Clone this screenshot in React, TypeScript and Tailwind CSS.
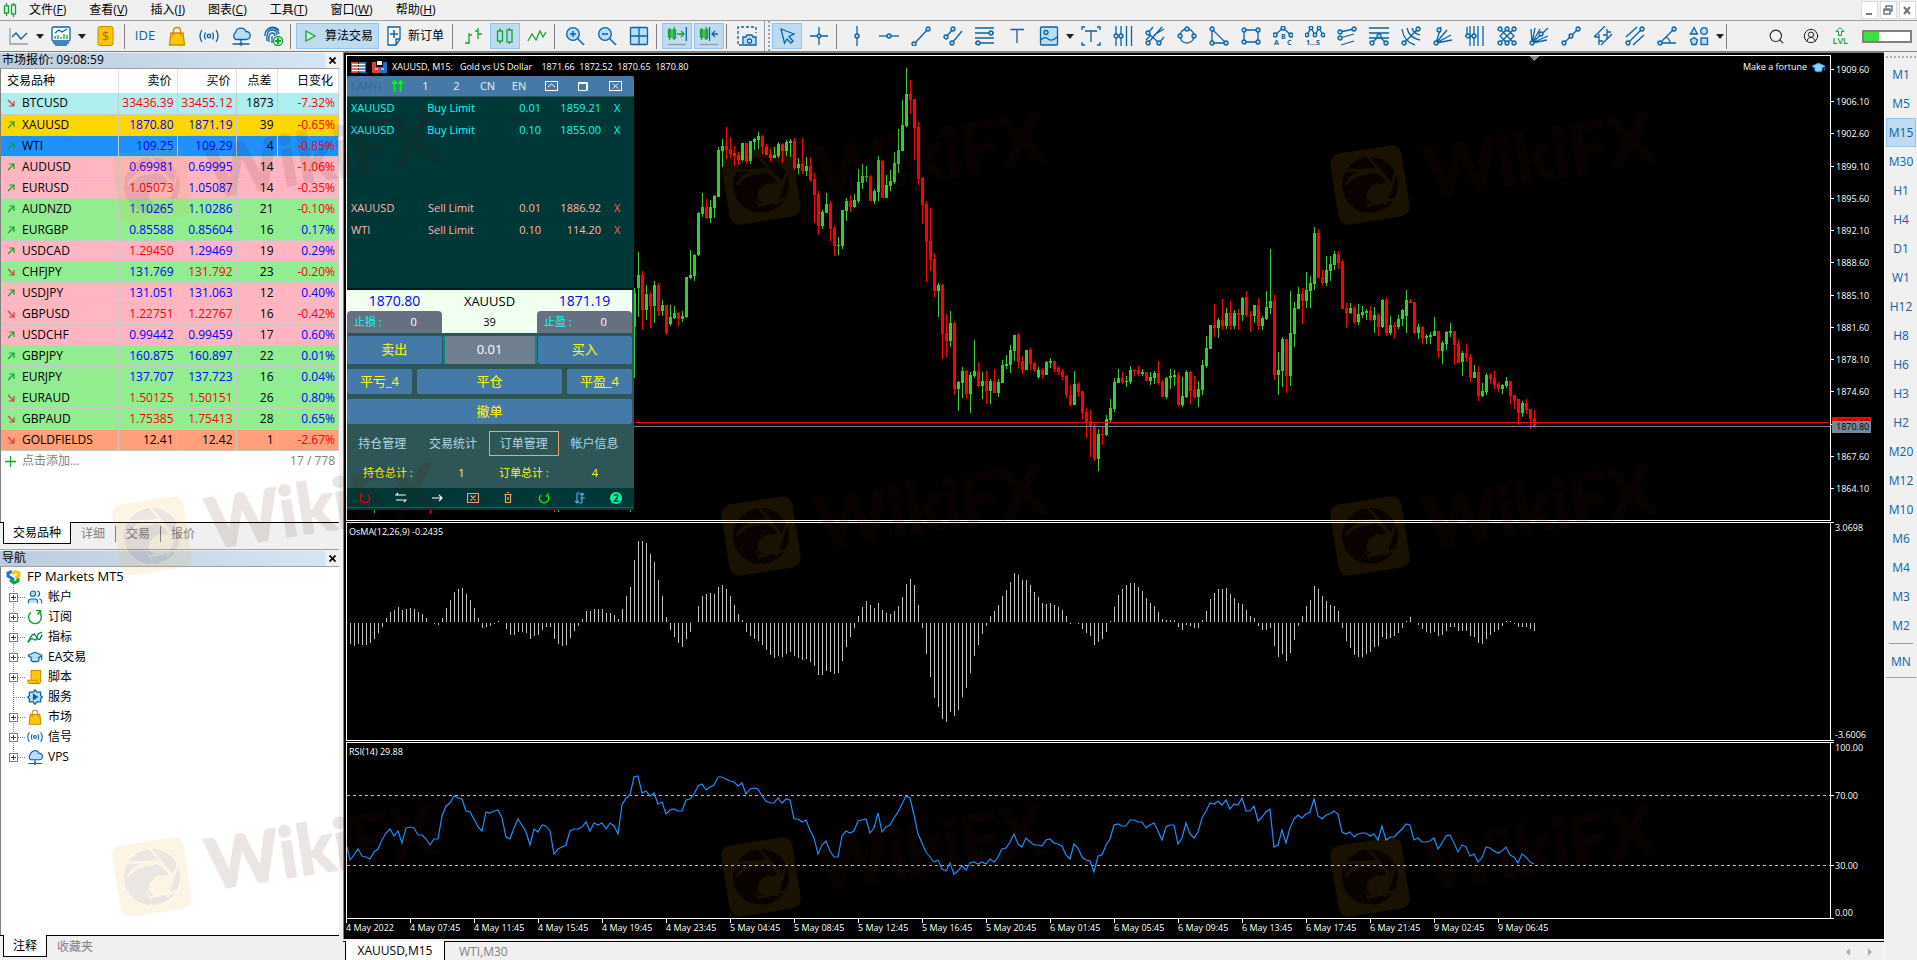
import * as React from "react";
import { CircleUserRound, GraduationCap, Search, Users } from "lucide-react";

const UI = "font-['Open_Sans','Noto_Sans_CJK_SC',sans-serif]";
const LINE = "#0b62a4";
const FILL = "#b9defa";

/* ---------- chart data ---------- */

// candle: u/d, high, low, body top, body bottom (third-pixel units)
const CANDLES_A = `u 683 953 700 800;u 576 770 645 683;d 633 809 645 749;u 675 779 702 749;d 693 803 702 737;u 663 788 675 737;d 669 767 675 752;u 720 767 735 752;d 735 824 735 818;u 735 797 770 791;u 738 776 759 773;d 756 797 759 776;u 752 785 768 776;u 651 773 651 770;u 570 657 645 654;u 582 662 585 648;u 456 588 459 585;u 399 471 441 462;d 417 477 441 474;u 420 489 441 474;u 405 474 408 444;u 261 410 270 410;u 237 321 258 272;d 201 297 258 270;d 231 294 267 282;d 258 317 279 288;d 276 314 285 299;u 249 303 249 300;d 249 308 249 303;u 243 312 243 303;u 234 270 237 246;u 216 267 228 240;d 225 282 228 261;d 252 285 258 285;d 267 306 282 294;u 261 294 285 293;u 246 294 252 288;d 249 309 252 272;u 240 288 246 272;u 237 291 243 249;d 234 330 243 324;u 294 342 312 324;d 234 342 312 333;u 291 348 318 333;d 291 365 318 360;d 339 489 357 405;d 393 525 402 498;u 450 507 456 498;u 399 459 432 459;d 423 543 432 507;d 498 588 504 558;u 531 585 555 558;u 450 567 450 558;u 414 483 423 453;d 405 456 423 441;u 402 444 420 441;u 327 429 366 423;u 312 387 348 369;u 318 366 348 350;d 345 423 348 423;u 387 432 393 423;u 288 423 300 396;d 300 414 303 414;u 345 414 375 414;u 330 393 363 378;u 276 372 309 366;u 207 339 270 312;u 120 273 195 272;u 24 201 102 198;d 60 162 102 120;d 117 300 117 204;d 186 375 201 357;d 351 492 354 435;d 423 666 432 546;d 444 633 543 600;d 579 711 597 693;u 669 771 675 693;d 672 897 675 822;d 762 891 819 843;u 753 861 789 843;d 786 1005 789 987;u 963 1053 966 987;u 921 1014 933 969;d 930 1017 933 1002;u 936 1059 945 1002;u 840 954 933 948;d 906 981 933 978;u 936 1017 963 978;d 933 1032 963 993;u 957 1032 963 993;d 927 999 963 999;u 957 1011 966 999;u 900 969 915 969;u 885 927 912 918;u 855 939 870 915;u 825 903 825 873;d 819 924 825 906;d 888 942 903 930;u 870 930 870 930;d 864 930 870 912;d 906 936 909 930;u 921 957 930 951;d 924 957 930 945;u 903 945 906 945;u 894 924 903 909;d 903 936 903 927;d 918 945 924 936;d 927 960 933 951;d 945 1014 948 1006;d 975 1041 1005 1035;u 933 1035 972 1035;d 966 1011 972 996;d 993 1077 993 1059;d 1044 1134 1056 1086;d 1050 1191 1083 1101;d 1092 1203 1098 1197;u 1107 1233 1122 1197;d 1101 1155 1122 1125;u 1065 1128 1077 1125;u 1017 1086 1044 1080;u 954 1056 966 1047;u 927 969 954 969;d 936 972 954 966;u 948 981 963 965`;

const CANDLES_B = `u 498 552 510 546;d 507 528 510 513;d 498 528 510 522;u 507 528 516 522;d 516 543 516 543;u 516 555 531 543;u 513 552 519 534;d 483 555 519 549;d 540 591 546 591;u 531 597 534 591;u 507 567 528 534;u 510 558 525 531;d 516 618 525 615;u 531 621 588 615;u 510 594 516 591;d 513 612 516 573;d 528 594 570 591;u 543 621 567 591;u 480 585 495 570;u 408 504 444 498;u 375 447 375 447;d 312 411 375 384;u 354 414 360 384;d 297 390 360 378;u 324 387 339 378;d 303 390 339 378;u 330 387 339 378;d 327 390 339 345;u 291 363 294 345;d 273 351 291 345;d 333 396 345 348;u 315 369 315 348;d 294 390 315 378;u 348 390 354 378;u 273 360 321 357;u 147 342 303 324;d 285 540 303 525;u 456 585 510 525;u 411 561 417 513;d 417 579 417 528;u 273 558 399 528;u 306 441 324 402;u 261 327 282 327;d 264 372 282 303;u 216 324 270 303;u 228 324 249 273;u 81 270 99 252;d 87 234 99 234;d 210 255 231 249;u 168 258 210 249;u 168 243 192 213;u 153 210 162 195;d 153 207 162 189;d 180 327 186 327;d 309 384 324 339;u 309 342 324 339;d 318 372 324 366;u 312 375 342 366;u 318 354 336 345;u 327 360 333 340;d 318 363 333 360;u 321 399 345 360;d 339 408 345 381;u 297 384 300 381;d 294 408 300 399;u 348 405 375 399;d 366 417 375 381;u 345 387 357 381;u 327 378 330 357;u 270 399 300 348;d 297 309 303 309;d 306 402 306 399;u 372 417 381 399;d 378 432 381 414;u 402 432 408 414;u 396 432 405 411;u 351 408 393 408;d 393 474 393 453;u 423 492 429 453;u 393 450 396 432;u 369 411 393 399;d 393 495 393 435;d 420 489 432 489;u 453 528 459 486;d 432 486 459 474;d 462 546 471 534;u 495 534 516 534;d 498 603 516 588;u 549 591 573 588;u 519 585 525 576;d 519 552 525 537;d 513 567 534 555;d 546 576 552 567;u 552 582 555 567;u 531 564 543 558;d 543 612 543 588;d 585 627 585 603;d 597 675 597 639;u 603 651 609 639;d 597 642 609 630;d 627 687 627 657;d 630 684 654 681`;

function parseCandles(src: string, base: number) {
  return src.split(";").map((row) => {
    const [dir, ...v] = row.split(" ");
    const [high, low, top, bottom] = v.map((n) => Math.round(base + Number(n) / 3));
    return { up: dir === "u", high, low, top, bottom };
  });
}

const CANDLES = [...parseCandles(CANDLES_A, 4), ...parseCandles(CANDLES_B, 144)];

const OSMA = [
  402, 408, 402, 405, 405, 399, 387, 369, 351, 324, 306, 300, 291, 300, 297, 294, 297, 306, 312, 324, 337, 342, 345, 324, 294, 270, 246, 237, 234, 252,
  270, 294, 324, 354, 351, 348, 342, 333, 337, 357, 375, 375, 366, 366, 369, 387, 378, 375, 360, 350, 351, 387, 402, 408, 405, 384, 363, 348, 327, 303,
  303, 297, 297, 297, 309, 309, 315, 328, 297, 258, 231, 150, 93, 93, 99, 132, 156, 210, 258, 321, 360, 381, 399, 411, 387, 366, 337, 288, 258, 252,
  249, 252, 231, 225, 237, 258, 285, 312, 330, 366, 378, 387, 393, 405, 420, 435, 444, 438, 441, 432, 426, 438, 444, 450, 447, 456, 468, 495, 495, 483,
  486, 492, 489, 453, 411, 381, 354, 318, 291, 273, 285, 294, 279, 300, 309, 312, 303, 288, 261, 222, 207, 225, 285, 354, 432, 501, 564, 591, 627, 636,
  606, 618, 600, 561, 534, 489, 438, 405, 372, 348, 318, 303, 285, 258, 240, 216, 189, 195, 210, 210, 225, 246, 261, 279, 282, 279, 285, 291, 300, 318,
  342, 337, 342, 357, 369, 378, 405, 396, 387, 366, 333, 291, 255, 237, 225, 219, 219, 231, 243, 264, 279, 288, 306, 327, 330, 330, 330, 351, 360, 345,
  348, 354, 354, 330, 303, 267, 249, 237, 237, 234, 252, 264, 279, 282, 300, 318, 324, 348, 360, 360, 354, 408, 441, 432, 453, 429, 390, 348, 318, 288,
  270, 228, 237, 258, 273, 285, 288, 303, 354, 393, 414, 435, 441, 441, 432, 426, 411, 408, 381, 387, 384, 378, 369, 354, 333, 321, 337, 345, 357, 366,
  369, 366, 378, 375, 363, 351, 351, 363, 363, 363, 378, 381, 399, 402, 387, 375, 366, 360, 348, 333, 333, 342, 351, 351, 351, 357, 363,
];

const RSI_A = [
  1051, 1034, 1018, 1039, 1042, 1048, 1025, 1016, 990, 970, 958, 978, 962, 999, 955, 952, 954, 975, 974, 988, 1005, 988, 988, 918, 888, 880, 858, 865,
  868, 903, 907, 926, 950, 964, 907, 910, 902, 901, 925, 981, 988, 955, 928, 945, 965, 1005, 958, 967, 946, 947, 963, 1032, 1018, 1011, 1004, 963, 958,
  958, 952, 935, 963, 940, 946, 938, 958, 940, 948, 973, 885, 865, 855, 802, 797, 849, 843, 859, 849, 883, 877, 912, 900, 898, 903, 903, 869, 868, 853,
  827, 823, 840, 832, 826, 802, 802, 807, 813, 817, 829, 819, 853, 838, 835, 836, 858, 874, 880, 878, 865, 880, 868, 869, 926, 928, 937, 931, 960, 985,
  1032, 1006, 992, 1022, 1042, 1042, 978, 964, 970, 962, 934, 929, 926, 970, 955, 910, 966, 952, 945, 924, 907, 883, 858, 865, 915, 972, 1000, 1027,
  1042, 1057, 1050, 1077, 1082, 1060, 1093, 1084, 1069, 1080, 1058, 1055, 1062,
];

const RSI_B = [
  1056, 1063, 1048, 1057, 1042, 1016, 1015, 996, 973, 1003, 1010, 985, 997, 1006, 1006, 1009, 991, 987, 998, 1003, 1009, 1036, 1048, 1003, 1015, 1040,
  1050, 1054, 1087, 1037, 1036, 1006, 988, 946, 942, 948, 949, 930, 931, 936, 937, 955, 946, 939, 963, 991, 952, 946, 946, 1003, 984, 940, 973, 983, 966,
  925, 902, 880, 883, 874, 886, 871, 898, 883, 885, 865, 904, 904, 889, 934, 920, 906, 898, 1012, 1004, 961, 1000, 955, 928, 916, 925, 912, 906, 868, 919,
  928, 916, 912, 904, 912, 967, 973, 967, 982, 973, 970, 970, 978, 973, 991, 949, 991, 982, 982, 970, 958, 943, 946, 991, 985, 996, 997, 994, 985, 1016,
  1000, 979, 976, 1000, 1027, 1006, 1012, 1039, 1033, 1057, 1045, 1012, 1015, 1022, 1030, 1024, 1012, 1036, 1040, 1060, 1033, 1042, 1057, 1063,
];

const TIMES = [
  "4 May 2022", "4 May 07:45", "4 May 11:45", "4 May 15:45", "4 May 19:45", "4 May 23:45", "5 May 04:45", "5 May 08:45", "5 May 12:45", "5 May 16:45",
  "5 May 20:45", "6 May 01:45", "6 May 05:45", "6 May 09:45", "6 May 13:45", "6 May 17:45", "6 May 21:45", "9 May 02:45", "9 May 06:45",
];

const PRICES = ["1909.60", "1906.10", "1902.60", "1899.10", "1895.60", "1892.10", "1888.60", "1885.10", "1881.60", "1878.10", "1874.60", "", "1867.60", "1864.10"];

/* ---------- market watch data ---------- */

const RED = "text-[#ff0000]";
const BLUE = "text-[#0000ff]";
const BLACK = "text-black";
const PINK = "bg-[#ffb6c1]";
const GREEN = "bg-[#90ee90]";

type Quote = [string, boolean, string, string, string, string, string, string, string];

// symbol, rising, bid, ask, spread, change, row colour, bid colour, ask colour
const QUOTES: Quote[] = [
  ["BTCUSD", false, "33436.39", "33455.12", "1873", "-7.32%", "bg-[#afeeee]", RED, RED],
  ["XAUUSD", true, "1870.80", "1871.19", "39", "-0.65%", "bg-[#ffd700]", BLUE, BLUE],
  ["WTI", true, "109.25", "109.29", "4", "-0.85%", "bg-[#1e90ff]", BLUE, BLUE],
  ["AUDUSD", true, "0.69981", "0.69995", "14", "-1.06%", PINK, BLUE, BLUE],
  ["EURUSD", true, "1.05073", "1.05087", "14", "-0.35%", PINK, RED, BLUE],
  ["AUDNZD", true, "1.10265", "1.10286", "21", "-0.10%", GREEN, BLUE, BLUE],
  ["EURGBP", true, "0.85588", "0.85604", "16", "0.17%", GREEN, BLUE, BLUE],
  ["USDCAD", true, "1.29450", "1.29469", "19", "0.29%", PINK, RED, BLUE],
  ["CHFJPY", false, "131.769", "131.792", "23", "-0.20%", GREEN, BLUE, RED],
  ["USDJPY", true, "131.051", "131.063", "12", "0.40%", PINK, BLUE, BLUE],
  ["GBPUSD", false, "1.22751", "1.22767", "16", "-0.42%", PINK, RED, RED],
  ["USDCHF", true, "0.99442", "0.99459", "17", "0.60%", PINK, BLUE, BLUE],
  ["GBPJPY", true, "160.875", "160.897", "22", "0.01%", GREEN, BLUE, BLUE],
  ["EURJPY", true, "137.707", "137.723", "16", "0.04%", GREEN, BLUE, BLUE],
  ["EURAUD", false, "1.50125", "1.50151", "26", "0.80%", GREEN, RED, RED],
  ["GBPAUD", false, "1.75385", "1.75413", "28", "0.65%", GREEN, RED, RED],
  ["GOLDFIELDS", false, "12.41", "12.42", "1", "-2.67%", "bg-[#ffa07a]", BLACK, BLACK],
];

/* ---------- icons ---------- */

function Ico({ children, size = 20, color = LINE }: { children: React.ReactNode; size?: number; color?: string }) {
  return (
    <svg width={size} height={size} viewBox="0 0 20 20" fill="none" stroke={color} strokeWidth="1.3" className="shrink-0">
      {children}
    </svg>
  );
}

// line drawing with little round handles on it
function Tool({ d, nodes = [] }: { d: string; nodes?: number[][] }) {
  return (
    <Ico>
      <path d={d} />
      {nodes.map(([x, y]) => (
        <circle key={x + "-" + y} cx={x} cy={y} r="2" fill={FILL} />
      ))}
    </Ico>
  );
}

function Bag({ size = 20 }: { size?: number }) {
  return (
    <Ico size={size} color="#c98a00">
      <path d="M4 7H16L17.500 19H2.500Z" fill="#fdc800" />
      <path d="M6.500 10V4.500Q6.500 1.500 10 1.500T13.500 4.500V10" />
    </Ico>
  );
}

function Signal({ size = 20 }: { size?: number }) {
  return (
    <Ico size={size}>
      <circle cx="10" cy="10" r="1.800" fill={FILL} />
      <path d="M6.500 6.500Q4.500 10 6.500 13.500M13.500 6.500Q15.500 10 13.500 13.500M3 4Q-1 10 3 16M17 4Q21 10 17 16" />
    </Ico>
  );
}

function CloudNet({ size = 20 }: { size?: number }) {
  return (
    <Ico size={size}>
      <path d="M5 13.500A4 4 0 0 1 4.500 6.500A5.500 5.500 0 0 1 15 5.500A4 4 0 0 1 15.500 13.500Z" fill={FILL} />
      <path d="M10 13.500V16.500M1.500 18H18.500" />
      <circle cx="10" cy="18" r="1" fill={FILL} />
    </Ico>
  );
}

function CandleIcon({ color = "#0fa52c" }: { color?: string }) {
  return (
    <Ico color={color}>
      <path d="M5 2V5M5 15V18M14.500 2V4M14.500 16V18" />
      <rect x="2.500" y="5" width="5" height="10" />
      <rect x="12" y="4" width="5" height="12" />
    </Ico>
  );
}

function Caret() {
  return (
    <button className="w-2 shrink-0" aria-label="more">
      <svg width="8" height="5" viewBox="0 0 8 5"><path d="M0 0H8L4 5Z" fill="#222" /></svg>
    </button>
  );
}

function Sep() {
  return <div className="w-1 h-[25px] shrink-0 border-l border-[#808080]" />;
}

function Btn({ label, on, children, wide }: { label: string; on?: boolean; children: React.ReactNode; wide?: boolean }) {
  return (
    <button
      aria-label={label}
      className={
        (on ? "bg-[#bfdbf2] border-[#92c6f2] " : "border-transparent ") +
        (wide ? "px-[5px] gap-[7px] " : "w-[30px] ") +
        "h-[26px] shrink-0 flex items-center justify-center border text-[12px] whitespace-nowrap"
      }
    >
      {children}
    </button>
  );
}

const DRAW_TOOLS: [string, React.ReactNode][] = [
  ["vertical line", <Tool d="M10 0V20" nodes={[[10, 10]]} />],
  ["horizontal line", <Tool d="M0 10H20" nodes={[[10, 10]]} />],
  ["trend line", <Tool d="M3 18L17 3" nodes={[[3, 18], [17, 3]]} />],
  ["channel", <Tool d="M3 11L10 3M9 17L19 5" nodes={[[3, 11], [10, 3], [9, 17]]} />],
  ["fibo", <Tool d="M0 2H19M0 7H19M0 12H19M0 17H19" nodes={[[16, 7], [3, 17]]} />],
  ["text", <Tool d="M3.500 3.500H17M10 3.500V17" />],
];

const DRAW_TOOLS_2: [string, React.ReactNode][] = [
  ["label", <Tool d="M4 5H16M10 5V16M1 4V1H4M16 1H19V4M1 16V19H4M16 19H19V16" />],
  ["cycles", <Tool d="M3 0V20M8 0V20M13.500 0V20M18.500 0V20" nodes={[[3, 10], [8, 10]]} />],
  ["pitchfork", <Tool d="M2 18L17 1M3 7L14 17M9 9L19 3M3 7L8 1M14 17L19 11M1 14L6 9" nodes={[[3, 7], [14, 17], [3, 17]]} />],
  ["ellipse", <Tool d="M10 3A7 7 0 1 1 9.900 3" nodes={[[10, 3], [3, 10], [17, 10]]} />],
  ["triangle", <Tool d="M3 3V17H17Z" nodes={[[3, 3], [3, 17], [17, 17]]} />],
  ["rectangle", <Tool d="M3 4H17V16H3Z" nodes={[[3, 4], [17, 4], [3, 16], [17, 16]]} />],
  ["elliott abc", <LetterTool a="A" b="B" c="C" />],
  ["elliott 12345", <WaveTool />],
  ["regression", <Tool d="M3 6L17 3M3 12L17 8M4 19L17 15" nodes={[[3, 6], [17, 3], [3, 12]]} />],
  ["andrews", <Tool d="M0 2H20M0 7H20M0 12H20M3 17L10 10L17 17" nodes={[[10, 10], [3, 17], [17, 17]]} />],
  ["fibo arcs", <Tool d="M3 17L17 3M1 3Q3 16 14 19M6 2Q8 12 19 14M11 2Q12 7 19 9" nodes={[[3, 17], [17, 3]]} />],
  ["fibo fan", <Tool d="M3 17L8 1M3 17L14 4M3 17L18 9M3 17L19 14" nodes={[[3, 17], [6, 4]]} />],
  ["time zones", <Tool d="M2 10V1M5 0V20M9 0V20M13 0V20M18 0V20M0 10H9" nodes={[[3, 10], [9, 10]]} />],
  ["gann grid", <Tool d="M3 3L17 17M17 3L3 17M10 3L3 10L10 17L17 10Z" nodes={[[3, 3], [10, 3], [17, 3], [3, 17], [10, 17], [17, 17]]} />],
  ["gann fan", <Tool d="M3 17L2 3M3 17L6 2M3 17L11 3M3 17L19 2M3 17L19 10M3 17L18 14" nodes={[[3, 17], [12, 8]]} />],
  ["polyline", <Tool d="M3 17L10 10L17 3" nodes={[[3, 17], [10, 10], [17, 3]]} />],
  ["std channel", <Tool d="M1 11L12 0M8 19L19 8M6 19V8M6 11H2M14 14V3M14 6H18M6 15H10M10 9H14" />],
  ["linear channel", <Tool d="M1 11L12 1M3 17L17 3M8 19L19 9" nodes={[[3, 17], [17, 3]]} />],
  ["angle", <Tool d="M3 17L17 3M3 17H19M9 11Q13 13 13 17" nodes={[[3, 17], [17, 3]]} />],
];

function LetterTool({ a, b, c }: { a: string; b: string; c: string }) {
  return (
    <Ico>
      <path d="M2 9L10 2L18 9" />
      {[[2, 9], [10, 2], [18, 9]].map(([x, y]) => <circle key={x} cx={x} cy={y} r="2" fill={FILL} />)}
      <g fill={LINE} stroke="none" className="font-['Open_Sans'] font-bold text-[7px]">
        <text x="1" y="19">{a}</text>
        <text x="8" y="13">{b}</text>
        <text x="14" y="19">{c}</text>
      </g>
    </Ico>
  );
}

function WaveTool() {
  return (
    <Ico>
      <path d="M2 9L6 2L10 9L14 2L18 9" />
      {[[2, 9], [6, 2], [10, 9], [14, 2], [18, 9]].map(([x, y]) => <circle key={x} cx={x} cy={y} r="1.800" fill={FILL} />)}
      <text x="1" y="19" fill={LINE} stroke="none" className="font-['Open_Sans'] font-bold text-[7px]">1...5</text>
    </Ico>
  );
}

/* ---------- top bars ---------- */

const MENUS = [["文件", "F"], ["查看", "V"], ["插入", "I"], ["图表", "C"], ["工具", "T"], ["窗口", "W"], ["帮助", "H"]];

function MenuBar() {
  return (
    <nav className="h-[21px] flex items-center pl-[3px] pr-[1px] border-b border-[#a0a0a0] text-[12px]">
      <svg width="14" height="16" viewBox="0 0 14 16" fill="none" stroke="#0fa52c" strokeWidth="1.300">
        <path d="M3.500 1V4M3.500 11V14M10.500 1V3M10.500 12V15" />
        <rect x="1.500" y="4" width="4" height="7" />
        <rect x="8.500" y="3" width="4" height="9" />
      </svg>
      <div className="flex gap-[23px] ml-3">
        {MENUS.map(([name, key]) => (
          <button key={key} className="leading-[18px]">{name}(<u>{key}</u>)</button>
        ))}
      </div>
      <div className="ml-auto flex gap-[2px]">
        <WinBtn label="minimize"><path d="M4 11H10" strokeWidth="2" /></WinBtn>
        <WinBtn label="restore"><path d="M5 5V3H11V8H9M3 6H9V11H3ZM3 7H9" strokeWidth="1.500" /></WinBtn>
        <WinBtn label="close"><path d="M4 4L10 11M10 4L4 11" strokeWidth="2.200" /></WinBtn>
      </div>
    </nav>
  );
}

function WinBtn({ label, children }: { label: string; children: React.ReactNode }) {
  return (
    <button aria-label={label} className="w-[17px] h-[18px] bg-white border border-[#dcdcdc]">
      <svg width="14" height="14" viewBox="0 0 14 14" fill="none" stroke="#6c7a89">{children}</svg>
    </button>
  );
}

function ToolBar() {
  return (
    <div className="h-[31px] flex items-center gap-[2px] pl-[4px] pr-[5px] border-b border-[#808080] overflow-hidden">
      <Btn label="chart"><Ico><path d="M1 2V18H19" stroke="#999" /><path d="M3 11L7 7L12 13L18 7" /></Ico></Btn>
      <Caret />
      <Btn label="indicators">
        <Ico>
          <rect x="1" y="1" width="18" height="14" rx="1.500" fill="#fff" />
          <path d="M4 7L8 4L11 6L16 3" />
          <path d="M4 13V10M7 13V9M10 13V11M13 13V8M16 13V9" stroke="#0fa52c" />
          <path d="M2 17H18M4 19H16" />
        </Ico>
      </Btn>
      <Caret />
      <Btn label="account" wide>
        <svg width="22" height="20" viewBox="0 0 22 20">
          <rect x="4" y="0.500" width="15" height="19" rx="2" fill="#fdc400" stroke="#c98a00" />
          <text x="11.500" y="15" textAnchor="middle" fill="#a86e00" className="font-['Open_Sans'] text-[13px]">$</text>
        </svg>
      </Btn>
      <Sep />
      <Btn label="IDE"><span className="text-[13px] text-[#0b62a4]">IDE</span></Btn>
      <Btn label="market"><Bag /></Btn>
      <Btn label="signals"><Signal /></Btn>
      <Btn label="vps"><CloudNet /></Btn>
      <Btn label="id">
        <Ico>
          <path d="M2 10A7 7 0 0 1 16 8M4 15Q3 4 9 4Q14 4 14 9M6 16Q5 7 9 7Q12 7 12 10M9 10V17M3 5Q9 -2 16 4" />
          <circle cx="15" cy="15" r="4.500" fill="#dff5e0" stroke="#0fa52c" />
          <path d="M15 12V18M12 15H18" stroke="#0fa52c" strokeWidth="2" />
        </Ico>
      </Btn>
      <Sep />
      <Btn label="算法交易" on wide>
        <svg width="16" height="16" viewBox="0 0 16 16" fill="#dff5e0" stroke="#0fa52c" strokeWidth="1.300"><path d="M4 3L13 8L4 13Z" /></svg>
        算法交易
      </Btn>
      <Btn label="新订单" wide>
        <svg width="14" height="20" viewBox="0 0 14 20" fill="#fff" stroke={LINE} strokeWidth="1.300">
          <path d="M1 1H13V13L9 19H1ZM13 13H9V19" />
          <path d="M7 4V12M3 8H11" strokeWidth="1.600" />
        </svg>
        新订单
      </Btn>
      <Sep />
      <Btn label="bars"><Ico color="#0fa52c"><path d="M6 7V18M6 17H2M6 9H9M15 2V13M15 5H12M15 8H19" /></Ico></Btn>
      <Btn label="candles" on><CandleIcon /></Btn>
      <Btn label="line"><Ico color="#0fa52c"><path d="M1 15L5 8L9 14L13 5L16 11L19 6" /></Ico></Btn>
      <Sep />
      <Btn label="zoom in"><Lens plus /></Btn>
      <Btn label="zoom out"><Lens /></Btn>
      <Btn label="tile"><Ico><rect x="1.500" y="1.500" width="17" height="17" rx="1" fill={FILL} /><path d="M10 2V18M2 10H18" /></Ico></Btn>
      <Sep />
      <Btn label="autoscroll" on>
        <Ico><g stroke="#0fa52c"><rect x="1.500" y="4" width="2.500" height="7" /><rect x="6" y="4" width="2.500" height="8" /><path d="M2.700 2V14M7.200 1V14M10 8H17M14 5L17 8L14 11" /></g><path d="M19.300 1V15" /><path d="M1 18.500H19" stroke="#999" /></Ico>
      </Btn>
      <Btn label="shift" on>
        <Ico><g stroke="#0fa52c"><rect x="1.500" y="4" width="2.500" height="7" /><rect x="6" y="4" width="2.500" height="8" /><path d="M2.700 2V14M7.200 1V14" /></g><path d="M10.500 1V15M19 8H13M16 5L13 8L16 11" /><path d="M1 18.500H19" stroke="#999" /></Ico>
      </Btn>
      <Sep />
      <Btn label="screenshot">
        <Ico>
          <path d="M5 19H1V1H19V7" strokeDasharray="3 2" />
          <path d="M6 11H9L10 9H15L16 11H19V19H6Z" fill={FILL} />
          <circle cx="12.500" cy="15" r="2" fill="#fff" />
        </Ico>
      </Btn>
      <div className="w-[6px] h-[30px] shrink-0 border-l border-[#a0a0a0] flex justify-end"><div className="border-l-2 border-dotted border-[#a0a0a0]" /></div>
      <Btn label="cursor" on><Ico><path d="M4 3L17 8L12 10.500L16 15L14 17L10 13L7.500 17Z" fill={FILL} /></Ico></Btn>
      <Btn label="crosshair"><Ico><path d="M10 1V19M1 10H19" /><circle cx="10" cy="10" r="1.800" fill={FILL} /></Ico></Btn>
      <Sep />
      {DRAW_TOOLS.map(([name, icon]) => <Btn key={name} label={name}>{icon}</Btn>)}
      <Btn label="picture"><Ico><rect x="1.500" y="1" width="17" height="18" rx="1" fill={FILL} /><circle cx="7" cy="6.500" r="2" /><path d="M2 14Q5 10 9 13T18 11" /></Ico></Btn>
      <Caret />
      {DRAW_TOOLS_2.map(([name, icon]) => <Btn key={name} label={name}>{icon}</Btn>)}
      <Btn label="shapes"><Ico><g fill={FILL}><path d="M1.500 8L5 1.500L8.500 8Z" /><circle cx="15" cy="5" r="3.300" /><path d="M5 11.500L8.500 14L7 18.500H3L1.500 14Z" /><rect x="12" y="12" width="6.500" height="6.500" /></g></Ico></Btn>
      <Caret />
      <Sep />
      <div className="ml-auto flex items-center gap-[14px]">
        <button aria-label="search"><Search size={17} strokeWidth={1.5} color="#222" /></button>
        <button aria-label="profile" className="ml-1"><CircleUserRound size={16} strokeWidth={1.5} color="#222" /></button>
        <div className="flex flex-col items-center">
          <svg width="10" height="9" viewBox="0 0 10 9" fill="none" stroke="#0fa52c"><path d="M3.500 8.500V4.500H1L5 0.500L9 4.500H6.500V8.500Z" /></svg>
          <span className="text-[9px] leading-[9px] font-semibold text-[#0fa52c]">LVL</span>
        </div>
        <div role="progressbar" aria-valuenow={33} className="w-[50px] h-[13px] border-2 border-[#808080] bg-white"><div className="w-1/3 h-full bg-[#3fe03f]" /></div>
      </div>
    </div>
  );
}

function Lens({ plus }: { plus?: boolean }) {
  return (
    <Ico>
      <circle cx="8" cy="8" r="6.300" fill={FILL} />
      <path d={plus ? "M13 13L19 19M5 8H11M8 5V11" : "M13 13L19 19M5 8H11"} strokeWidth="1.500" />
    </Ico>
  );
}

/* ---------- left side ---------- */

function PanelTitle({ children }: { children: React.ReactNode }) {
  return (
    <div className="flex h-4 mt-[1px] border-b border-[#a0a0a0]">
      <h2 className="flex-1 pl-[2px] text-[12px] leading-[14px] bg-linear-to-r from-[#bccbdd] to-[#d6e5f4]">{children}</h2>
      <button aria-label="close" className="w-[14px] flex items-center justify-center">
        <svg width="7" height="7" viewBox="0 0 7 7" stroke="#000" strokeWidth="1.700"><path d="M0.500 0.500L6.500 6.500M6.500 0.500L0.500 6.500" /></svg>
      </button>
    </div>
  );
}

function BottomTabs({ tabs }: { tabs: string[] }) {
  return (
    <div className="flex items-start h-[23px] shrink-0 pl-[3px] bg-[#f0f0f0] border-t border-black text-[12px]">
      {tabs.map((t, i) =>
        i === 0 ? (
          <button key={t} className="-mt-px h-[22px] px-[9px] bg-white border-x border-b border-black leading-5">{t}</button>
        ) : (
          <button key={t} className={(i > 1 ? "border-l border-[#808080] " : "") + "mt-[3px] h-4 px-[10px] text-[#808080] leading-[14px]"}>{t}</button>
        )
      )}
    </div>
  );
}

function Arrow({ up }: { up: boolean }) {
  return (
    <svg width="8" height="8" viewBox="0 0 8 8" fill="none" stroke={up ? "#0fa52c" : "#d43c3c"} strokeWidth="1.200">
      <path d={up ? "M1 7L7 1M2 1H7V6" : "M1 1L7 7M2 7H7V2"} />
    </svg>
  );
}

function MarketWatch() {
  const num = "pr-[3px] text-right border-r border-[#c8c8c8]";
  const head = "font-normal pr-[5px] border-r border-[#e0e0e0]";
  return (
    <section className="h-[498px] shrink-0 flex flex-col">
      <PanelTitle>市场报价: 09:08:59</PanelTitle>
      <div className="flex-1 bg-white border-l border-[#808080]">
        <table className="w-full table-fixed border-collapse text-[12px] leading-5">
          <colgroup>
            <col className="w-[117px]" /><col className="w-[59px]" /><col className="w-[59px]" /><col className="w-[41px]" /><col />
          </colgroup>
          <thead>
            <tr className="h-6 text-right">
              <th className="font-normal text-left pl-[6px] border-r border-[#e0e0e0]">交易品种</th>
              <th className={head}>卖价</th>
              <th className={head}>买价</th>
              <th className={head}>点差</th>
              <th className={head}>日变化</th>
            </tr>
          </thead>
          <tbody>
            {QUOTES.map(([sym, up, bid, ask, spread, change, bg, bidColor, askColor]) => (
              <tr key={sym} className={bg + " h-[21px] border-b border-[#c8c8c8]"}>
                <td className="border-r border-[#c8c8c8]">
                  <div className="flex items-center gap-[7px] pl-[6px]"><Arrow up={up} />{sym}</div>
                </td>
                <td className={num + " " + bidColor}>{bid}</td>
                <td className={num + " " + askColor}>{ask}</td>
                <td className={num}>{spread}</td>
                <td className={num + " " + (change.startsWith("-") ? RED : BLUE)}>{change}</td>
              </tr>
            ))}
          </tbody>
        </table>
        <div className="flex items-center h-[21px] pl-1 pr-1 text-[12px] text-[#808080]">
          <button className="flex items-center gap-[6px]">
            <svg width="11" height="11" viewBox="0 0 11 11" stroke="#0fa52c" strokeWidth="1.300"><path d="M5.500 0V11M0 5.500H11" /></svg>
            点击添加...
          </button>
          <span className="ml-auto">17 / 778</span>
        </div>
      </div>
      <BottomTabs tabs={["交易品种", "详细", "交易", "报价"]} />
      <div className="h-[5px] border-b border-[#a0a0a0]" />
    </section>
  );
}

const TREE: [string, React.ReactNode, boolean][] = [
  ["帐户", <Users size={16} strokeWidth={1.6} color={LINE} fill={FILL} />, true],
  ["订阅", <Ico size={16} color="#0fa52c"><path d="M5 4A8 8 0 1 0 16 5M11 2H17V8M17 2L13 7" strokeWidth="1.800" /></Ico>, true],
  ["指标", <Ico size={16}><path d="M1 16L6 8L9 6L14 13L16 13L19 7" strokeWidth="1.600" /><path d="M1 17L6 12L11 14L14 6L19 4" stroke="#0fa52c" strokeWidth="1.600" /></Ico>, true],
  ["EA交易", <GraduationCap size={16} strokeWidth={1.8} color={LINE} fill={FILL} />, true],
  ["脚本", <Ico size={16} color="#c98a00"><path d="M5 2H17V16Q17 18 15 18H3Q1 18 1 14H5Z" fill="#fdc800" /><path d="M5 14H13V18" /></Ico>, true],
  ["服务", <Ico size={16}><path d="M10 1L12.500 4L17 4L17 8.500L19 10L17 12.500L17 16L12.500 16L10 19L7.500 16L3 16L3 12.500L1 10L3 8.500L3 4L7.500 4Z" fill={FILL} strokeWidth="1.600" /><path d="M8 6.500L13 10L8 13.500Z" fill={LINE} /></Ico>, false],
  ["市场", <Bag size={16} />, true],
  ["信号", <Signal size={16} />, true],
  ["VPS", <CloudNet size={16} />, true],
];

function Navigator() {
  return (
    <section className="flex-1 min-h-0 flex flex-col">
      <PanelTitle>导航</PanelTitle>
      <div className="flex-1 bg-white border-l border-[#808080] text-[12px]">
        <div className="flex items-center gap-[6px] h-5 pl-[5px]">
          <svg width="15" height="15" viewBox="0 0 15 15" fill="none" strokeWidth="3">
            <path d="M6 1.500L2 3V6L7 9V13" stroke="#1377d4" />
            <path d="M6 4L9 1.500L13 3V6L9 7" stroke="#fdc400" />
            <path d="M4 10L8 13L12 11V8" stroke="#12a436" />
          </svg>
          <span className="text-[13px]">FP Markets MT5</span>
        </div>
        <ul>
          {TREE.map(([name, icon, more], i) => (
            <li key={name} className="flex items-center h-5">
              <svg width="26" height="20" viewBox="0 0 26 20" fill="none" stroke="#808080">
                <path d={i === TREE.length - 1 ? "M12.500 0V10" : "M12.500 0V20"} strokeDasharray="1 1" />
                <path d="M13 10.500H24" strokeDasharray="1 1" />
                {more && <rect x="8.500" y="6.500" width="8" height="8" fill="#fff" />}
                {more && <path d="M10 10.500H15M12.500 8V13" stroke="#1f3f8f" />}
              </svg>
              {icon}
              <span className="ml-[5px]">{name}</span>
            </li>
          ))}
        </ul>
      </div>
      <BottomTabs tabs={["注释", "收藏夹"]} />
      <div className="h-[2px]" />
    </section>
  );
}

/* ---------- trade panel over the chart ---------- */

const ORDERS = {
  buy: [["XAUUSD", "Buy Limit", "0.01", "1859.21"], ["XAUUSD", "Buy Limit", "0.10", "1855.00"]],
  sell: [["XAUUSD", "Sell Limit", "0.01", "1886.92"], ["WTI", "Sell Limit", "0.10", "114.20"]],
};

function OrderRow({ row, x }: { row: string[]; x: string }) {
  return (
    <li className="flex items-center h-[22px] pl-1">
      <span className="w-[74px]">{row[0]}</span>
      <span className="w-[52px] text-center">{row[1]}</span>
      <span className="w-[64px] text-right">{row[2]}</span>
      <span className="w-[60px] text-right">{row[3]}</span>
      <button className={"ml-[13px] " + x}>X</button>
    </li>
  );
}

function StopField({ id, label }: { id: string; label: string }) {
  return (
    <div className="flex items-center w-[95px] h-[22px] pl-[7px] bg-[#667080] rounded-t-sm text-[11px]">
      <label htmlFor={id} className="text-[#00ffff] whitespace-nowrap">{label} :</label>
      <input id={id} defaultValue="0" className="w-12 ml-2 bg-transparent text-center text-white" />
    </div>
  );
}

function TradePanel() {
  const blue = "bg-[#4479a8] rounded-[2px] text-[13px] text-[#ffff00]";
  return (
    <div className="absolute left-0 top-5 w-[287px] bg-[#2e5656] text-[11px]">
      <div className="flex items-center h-5 mb-[1px] pl-1 bg-[#4479a8] rounded-t-sm text-[#f0f0f0]">
        <span className="w-[38px] text-[#3a6c98]">LANYI</span>
        <svg width="13" height="12" viewBox="0 0 13 12" fill="none" stroke="#00ff00" strokeWidth="1.400" className="ml-[2px]">
          <path d="M3.500 12V1M1 4L3.500 1L6 4M9.500 12V1M7 4L9.500 1L12 4" />
        </svg>
        <button className="w-[31px] ml-[6px]">1</button>
        <button className="w-[31px]">2</button>
        <button className="w-[31px]">CN</button>
        <button className="w-[32px]">EN</button>
        <button aria-label="collapse" className="w-[32px] flex justify-center"><PanelBox d="M3 6L6.500 3L10 6" /></button>
        <button aria-label="window" className="w-[32px] flex justify-center">
          <svg width="11" height="10" viewBox="0 0 11 10" fill="none" stroke="#fff"><path d="M0.500 2.500H8.500V9.500H0.500ZM0 1.500H9.500V9.500" /></svg>
        </button>
        <button aria-label="close" className="w-[32px] flex justify-center"><PanelBox d="M4 2.500L9 7.500M9 2.500L4 7.500" /></button>
      </div>
      <div className="h-[193px] bg-[#003838] border-b-2 border-[#001c1c]">
        <ul className="h-[100px] text-[#00ffff]">{ORDERS.buy.map((r) => <OrderRow key={r[3]} row={r} x="text-[#00ffff]" />)}</ul>
        <ul className="text-[#ffb6b0]">{ORDERS.sell.map((r) => <OrderRow key={r[3]} row={r} x="text-[#ff6347]" />)}</ul>
      </div>
      <div className="mr-[2px]">
        <div className="bg-[#f0fff0]">
          <div className="grid grid-cols-3 h-[21px] items-center text-center text-black">
            <span className="text-[14px] leading-5 text-[#0000ff]">1870.80</span>
            <span className="text-[13px] leading-5">XAUUSD</span>
            <span className="text-[14px] leading-5 text-[#0000ff]">1871.19</span>
          </div>
          <div className="flex items-center justify-between h-[22px] text-black">
            <StopField id="sl" label="止损" />
            <span>39</span>
            <StopField id="tp" label="止盈" />
          </div>
        </div>
        <div className="flex gap-[1px] h-7 mt-[3px]">
          <button className={"flex-1 " + blue}>卖出</button>
          <input aria-label="volume" defaultValue="0.01" className="w-[94px] border-x-2 border-[#008b8b] bg-[#708090] text-center text-[13px] text-white" />
          <button className={"flex-1 " + blue}>买入</button>
        </div>
        <div className="flex gap-[5px] h-[25px] mt-[5px]">
          <button className={"w-[65px] " + blue}>平亏_4</button>
          <button className={"flex-1 " + blue}>平仓</button>
          <button className={"w-[65px] " + blue}>平盈_4</button>
        </div>
        <button className={"w-full h-[25px] mt-[5px] block " + blue}>撤单</button>
      </div>
      <div className="grid grid-cols-4 h-[25px] mt-[7px] mr-1 text-[12px] text-[#add8e6]">
        <button>持仓管理</button>
        <button>交易统计</button>
        <button className="border border-[#f4a460]">订单管理</button>
        <button>帐户信息</button>
      </div>
      <div className="flex items-center h-8 pl-4 pt-[2px] text-[#ffff00]">
        <span className="w-[71px]">持仓总计 :</span><span className="w-[55px] text-center">1</span>
        <span className="ml-[10px] w-[71px]">订单总计 :</span><span className="w-[50px] text-center">4</span>
      </div>
      <div className="h-5 bg-[#003838] grid grid-cols-8 items-center justify-items-center border-b border-[#2e5656]">
        <MiniBtn label="refresh" color="#ff0000" d="M2 4A4.500 4.500 0 1 0 9 3M2 1V4H5" />
        <MiniBtn label="swap" color="#ffffff" d="M11 3H1L3 1M1 8H11L9 10" />
        <MiniBtn label="next" color="#ffffff" d="M1 6H11M8 3L11 6L8 9" />
        <MiniBtn label="cancel" color="#f4a460" d="M0.500 1.500H11.500V10.500H0.500ZM3.500 3.500L8.500 8.500M8.500 3.500L3.500 8.500" />
        <MiniBtn label="delete" color="#f4a460" d="M3.500 3V10.500H8.500V3M2.500 2.500H9.500M5 0.500H7M6 5V8" />
        <MiniBtn label="undo" color="#00ff00" d="M3 3A4.500 4.500 0 1 0 10 4M7 4H10V1" />
        <MiniBtn label="sort" color="#4fa8f0" d="M3 1V11M1 9L3 11L5 9M8 11V1M6 3L8 1L10 3M3 1H6M8 11H5M6 6H11" />
        <span className="w-3 h-3 rounded-full bg-[#00fa9a] text-[#003838] text-[10px] leading-3 font-bold text-center">2</span>
      </div>
      <div className="h-[2px] bg-[#003838]" />
    </div>
  );
}

function PanelBox({ d }: { d: string }) {
  return (
    <svg width="13" height="10" viewBox="0 0 13 10" fill="none" stroke="#fff"><rect x="0.500" y="0.500" width="12" height="9" /><path d={d} /></svg>
  );
}

function MiniBtn({ label, color, d }: { label: string; color: string; d: string }) {
  return (
    <button aria-label={label}>
      <svg width="12" height="12" viewBox="0 0 12 12" fill="none" stroke={color} strokeWidth="1.200"><path d={d} /></svg>
    </button>
  );
}

/* ---------- chart ---------- */

const AXIS_TEXT = "fill-white text-[9px] font-['Open_Sans']";

function Pane({ children, axis, height, fill }: { children: React.ReactNode; axis: React.ReactNode; height: string; fill?: boolean }) {
  return (
    <div className={"grid grid-cols-[1fr_53px] " + height + (fill ? "" : " mt-[1px]")}>
      <div className="relative border border-white overflow-hidden">{children}</div>
      <svg className="w-full h-full">{axis}</svg>
    </div>
  );
}

function PricePane() {
  return (
    <Pane
      height="h-[466px]"
      fill
      axis={
        <g className={AXIS_TEXT}>
          {PRICES.map((p, i) => {
            const y = Math.round(14 + i * 32.23);
            return (
              <g key={i}>
                <rect x="0" y={y} width="3" height="1" />
                <text x="5" y={y + 4}>{p}</text>
              </g>
            );
          })}
          <rect x="1" y="362" width="39" height="12" className="fill-[#ff0000]" />
          <text x="5" y="371" className="fill-black">1871.19</text>
          <rect x="1" y="366" width="39" height="12" className="fill-[#778899]" />
          <text x="5" y="375" className="fill-black">1870.80</text>
        </g>
      }
    >
      <svg className="block w-full h-full" shapeRendering="crispEdges">
        {CANDLES.map((c, i) => {
          const x = 287 + i * 4;
          const color = c.up ? "#32cd32" : "#ff0000";
          return (
            <g key={i} fill={color}>
              <rect x={x} y={c.high} width="1" height={c.low - c.high} />
              <rect x={x - 1} y={c.top} width="3" height={Math.max(1, c.bottom - c.top)} />
            </g>
          );
        })}
        <g fill="#32cd32"><rect x="27" y="450" width="1" height="7" /><rect x="211" y="450" width="1" height="6" /><rect x="283" y="450" width="1" height="6" /></g>
        <g fill="#ff0000"><rect x="83" y="450" width="1" height="8" /><rect x="207" y="450" width="1" height="6" /></g>
        <rect x="0" y="366" width="100%" height="1" fill="#ff0000" />
        <rect x="0" y="370" width="100%" height="1" fill="#778899" />
        <path d="M1182 0H1192L1187 5Z" fill="#778899" />
      </svg>
      <div className="absolute left-1 right-1 top-[1px] h-5 flex items-center text-[9px] text-white whitespace-pre">
        <svg width="15" height="11" viewBox="0 0 15 11">
          <rect width="7" height="11" fill="#e0403a" /><rect x="8" width="7" height="11" fill="#1b74c4" />
          <path d="M1 2.500H14M1 5.500H14M1 8.500H14" stroke="#fff" strokeWidth="1.300" />
        </svg>
        <svg width="15" height="12" viewBox="0 0 15 12" className="ml-[6px]">
          <path d="M0 1H4V6H8V12H0Z" fill="#e0403a" /><path d="M11 1H15V12H8V6H11Z" fill="#1b74c4" />
          <path d="M5 0H10V4H5Z" fill="#fff" /><path d="M3 8H6M9 8H12" stroke="#fff" />
        </svg>
        <span className="ml-[5px]">XAUUSD, M15:   Gold vs US Dollar    1871.66  1872.52  1870.65  1870.80</span>
        <span className="ml-auto mr-1">Make a fortune</span>
        <GraduationCap size={15} strokeWidth={1.5} color="#2a8bd8" fill="#8fd0ff" />
      </div>
      <TradePanel />
    </Pane>
  );
}

function OsmaPane() {
  return (
    <Pane
      height="h-[219px]"
      axis={
        <g className={AXIS_TEXT}>
          <rect x="0" y="0" width="3" height="1" /><text x="4" y="9">3.0698</text>
          <text x="4" y="216">-3.6006</text><rect x="0" y="218" width="3" height="1" />
        </g>
      }
    >
      <svg className="block w-full h-full" shapeRendering="crispEdges">
        {OSMA.map((v, i) => {
          const y = Math.round(v / 3 - 13);
          return v === 337 ? null : <rect key={i} x={3 + i * 4} y={Math.min(y, 100)} width="1" height={Math.max(1, v < 337 ? 99 - y : y - 100)} fill="#c0c0c0" />;
        })}
        <text x="2" y="12" className={AXIS_TEXT}>OsMA(12,26,9) -0.2435</text>
      </svg>
    </Pane>
  );
}

function RsiPane() {
  const points = [`0,104`, ...[...RSI_A, ...RSI_B].map((v, i) => `${3 + i * 4},${Math.round(v / 3 - 233)}`)].join(" ");
  return (
    <Pane
      height="h-[177px]"
      axis={
        <g className={AXIS_TEXT}>
          <rect x="0" y="0" width="3" height="1" /><text x="4" y="9">100.00</text>
          <rect x="0" y="53" width="3" height="1" /><text x="4" y="57">70.00</text>
          <rect x="0" y="123" width="3" height="1" /><text x="4" y="127">30.00</text>
          <text x="4" y="174">0.00</text><rect x="0" y="176" width="3" height="1" />
        </g>
      }
    >
      <svg className="block w-full h-full">
        <g stroke="#c0c0c0" strokeDasharray="3 3" shapeRendering="crispEdges">
          <line x1="0" y1="52.500" x2="100%" y2="52.500" />
          <line x1="0" y1="122.500" x2="100%" y2="122.500" />
        </g>
        <polyline points={points} fill="none" stroke="#1e90ff" strokeWidth="1.200" />
        <text x="2" y="12" className={AXIS_TEXT}>RSI(14) 29.88</text>
      </svg>
    </Pane>
  );
}

function ChartWindow() {
  return (
    <main className="flex-1 min-w-0 flex flex-col ml-1">
      <div className="flex-1 bg-black border-l border-t border-[#808080] pl-[2px] pt-[2px] overflow-hidden">
        <PricePane />
        <OsmaPane />
        <RsiPane />
        <svg className="block w-full h-5">
          {TIMES.map((t, i) => (
            <g key={t} className={AXIS_TEXT}>
              <rect x={i * 64} y="0" width="1" height="4" />
              <text x={i * 64} y="12">{t}</text>
            </g>
          ))}
        </svg>
      </div>
      <div className="flex items-start h-[19px] mt-[2px] shrink-0 border-t border-black text-[12px] pl-[2px]">
        <button className="h-[19px] w-[100px] -mt-px bg-white border-x border-black leading-5">XAUUSD,M15</button>
        <button className="px-[14px] text-[#808080] leading-5">WTI,M30</button>
        <svg width="26" height="8" viewBox="0 0 26 8" fill="#b0b0b0" className="ml-auto mr-3 mt-[6px]"><path d="M4 0V8L0 4ZM22 0V8L26 4Z" /></svg>
      </div>
    </main>
  );
}

const FRAMES = ["M1", "M5", "M15", "M30", "H1", "H4", "D1", "W1", "H12", "H8", "H6", "H3", "H2", "M20", "M12", "M10", "M6", "M4", "M3", "M2"];

function TimeframeBar() {
  return (
    <aside className="w-[33px] shrink-0 border-l border-white px-[1px] text-[12px] text-[#0b62a4]">
      <div className="h-[3px] mt-[3px] mb-[2px] border-b-2 border-dotted border-[#b0b0b0]" />
      {FRAMES.map((f) => (
        <button key={f} className={(f === "M15" ? "bg-[#bfdbf2] border-[#92c6f2] " : "border-transparent ") + "block w-full h-[29px] border"}>{f}</button>
      ))}
      <div className="h-1 mx-[3px] border-b border-[#a0a0a0]" />
      <button className="block w-full h-[34px] pt-[2px] border-b border-[#a0a0a0]">MN</button>
    </aside>
  );
}

/* ---------- watermark ---------- */

function Watermark() {
  return (
    <svg className="absolute inset-0 w-full h-full pointer-events-none" aria-hidden="true">
      {[152, 761, 1370].map((x) =>
        [185, 536, 877].map((y) => (
          <g key={x + "-" + y} transform={`translate(${x} ${y}) rotate(-9)`} opacity="0.106">
            <rect x="-36" y="-36" width="72" height="72" rx="10" fill="#ebaa1c" />
            <circle r="28" fill="#4b1300" />
            <g stroke="#ebaa1c" strokeWidth="2.500" fill="none">
              <path d="M-22 -18L12 -14M2 -29L22 4M27 -8L12 22M22 18L-8 20M-4 28L-10 8" />
              <path d="M-24 -4Q-12 -18 4 -14Q16 -10 18 2L8 0Q-4 4 -4 12Q-2 18 4 18L12 16L20 2L10 -13" fill="#ebaa1c" />
            </g>
            <path d="M-26 6C-24 -8 -12 -12 0 -11C8 -10 13 -5 13 1L5 -1C2 2 -5 3 -7 9C-9 16 -6 22 -2 27C-14 26 -22 18 -26 6Z" fill="#4b1300" />
            <text x="56" y="22" fill="#4b1300" stroke="#4b1300" strokeWidth="2" strokeLinejoin="round" className="font-['Lato'] font-bold text-[70px]">WikiFX</text>
          </g>
        ))
      )}
    </svg>
  );
}

export default function App() {
  return (
    <div className={UI + " relative h-screen flex flex-col overflow-hidden bg-[#f0f0f0] text-black"}>
      <MenuBar />
      <ToolBar />
      <div className="flex-1 min-h-0 flex">
        <div className="w-[339px] shrink-0 flex flex-col">
          <MarketWatch />
          <Navigator />
        </div>
        <ChartWindow />
        <TimeframeBar />
      </div>
      <Watermark />
    </div>
  );
}
